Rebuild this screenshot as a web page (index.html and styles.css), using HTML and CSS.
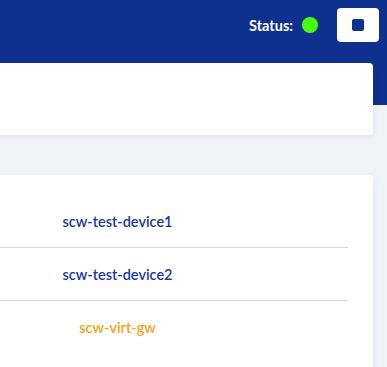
FILE: index.html
```html
<!DOCTYPE html>
<html lang="en">
<head>
  <meta charset="UTF-8" />
  <title>Devices</title>
  <meta name="viewport" content="width=device-width, initial-scale=1.0" />
  <link rel="stylesheet" href="styles.css">
</head>
<body>
  <header class="topbar">
    <span class="status-label">Status:</span>
    <span class="status-dot"></span>
    <button class="stop-btn" aria-label="Stop"><span class="stop-icon"></span></button>
  </header>

  <main class="content">
    <div class="card card-top"></div>

    <div class="card card-list">
      <div class="row"><span class="name">scw-test-device1</span></div>
      <div class="row"><span class="name">scw-test-device2</span></div>
      <div class="row"><span class="name gw">scw-virt-gw</span></div>
    </div>
  </main>
</body>
</html>
```

FILE: styles.css
```css
body {
  margin: 0;
  font-family: Lato, "Open Sans", sans-serif;
  background: #f0f3f8;
  overflow: hidden;
  height: 367px;
}
.topbar {
  display: flex;
  align-items: center;
  justify-content: flex-end;
  height: 50px;
  padding-right: 8px;
  background: #0e318f;
}
.status-label {
  color: #fff;
  font-weight: bold;
  font-size: 14.5px;
}
.status-dot {
  width: 16px;
  height: 16px;
  border-radius: 50%;
  background: #46ff0c;
  margin-left: 9px;
}
.stop-btn {
  display: flex;
  align-items: center;
  justify-content: center;
  width: 42px;
  height: 34px;
  margin-left: 19px;
  padding: 0;
  border: none;
  border-radius: 4px;
  background: #fff;
  cursor: pointer;
}
.stop-icon {
  width: 12px;
  height: 12px;
  border-radius: 2px;
  background: #0e318f;
}
.content {
  padding: 13px 14px 0 0;
  background: linear-gradient(#0e318f 0 55px, #f0f3f8 55px);
}
.card {
  margin-left: -8px;
  background: #fff;
  border-radius: 4px;
  box-shadow: 0 2px 6px rgba(20, 40, 90, 0.08);
}
.card-top {
  height: 72px;
  margin-bottom: 40px;
}
.card-list {
  padding: 20px 25px 30px 8px;
  border-radius: 4px 4px 0 0;
}
.row {
  display: grid;
  grid-template-columns: 235px 1fr;
  align-items: center;
  height: 52px;
  border-bottom: 1px solid #d8d8d8;
}
.row:last-child {
  border-bottom: none;
}
.name {
  text-align: center;
  font-size: 14.5px;
  font-weight: 600;
  color: #18399a;
}
.name.gw {
  color: #f9a21a;
}
```
